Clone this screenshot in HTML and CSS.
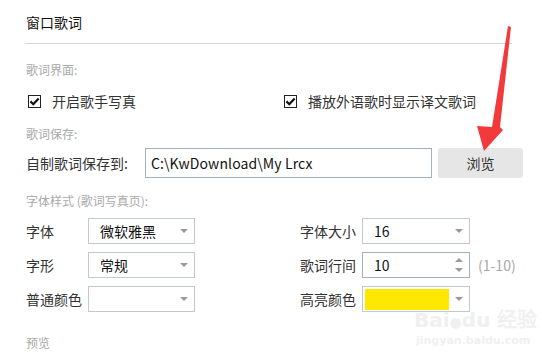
FILE: index.html
```html
<!DOCTYPE html>
<html lang="zh-cn">
<head>
    <meta charset="UTF-8">
    <meta name="viewport" content="width=device-width, initial-scale=1.0">
    <title>窗口歌词</title>
    <link rel="stylesheet" href="styles.css">
</head>
<body>

    <div class="panel">
        <div class="title">窗口歌词</div>

        <div class="group-label first">歌词界面:</div>
        <div class="checks">
            <label class="check">
                <span class="box">
                    <svg width="11" height="11" viewBox="0 0 11 11"><path d="M1.5 5.4 L4.3 8.2 L9.6 2.6" fill="none" stroke="#111" stroke-width="2.2"/></svg>
                </span>
                <span>开启歌手写真</span>
            </label>
            <label class="check">
                <span class="box">
                    <svg width="11" height="11" viewBox="0 0 11 11"><path d="M1.5 5.4 L4.3 8.2 L9.6 2.6" fill="none" stroke="#111" stroke-width="2.2"/></svg>
                </span>
                <span>播放外语歌时显示译文歌词</span>
            </label>
        </div>

        <div class="group-label">歌词保存:</div>
        <div class="save-row">
            <span class="save-label">自制歌词保存到:</span>
            <div class="path-input">C:\KwDownload\My Lrcx</div>
            <button class="browse-btn">浏览</button>
        </div>

        <div class="group-label">字体样式 (歌词写真页):</div>
        <div class="font-grid">
            <span class="lbl">字体</span>
            <div class="select"><span>微软雅黑</span><i class="caret"></i></div>
            <span></span>
            <span class="lbl">字体大小</span>
            <div class="select"><span>16</span><i class="caret"></i></div>
            <span></span>

            <span class="lbl">字形</span>
            <div class="select"><span>常规</span><i class="caret"></i></div>
            <span></span>
            <span class="lbl">歌词行间</span>
            <div class="select spin"><span>10</span>
                <span class="spin-arrows"><i class="up"></i><i class="down"></i></span>
            </div>
            <span class="range">(1-10)</span>

            <span class="lbl">普通颜色</span>
            <div class="select"><span></span><i class="caret"></i></div>
            <span></span>
            <span class="lbl">高亮颜色</span>
            <div class="select color"><span class="swatch"></span><i class="caret"></i></div>
            <span></span>
        </div>

        <div class="group-label preview">预览</div>
    </div>

    <!-- red arrow drawn over the screenshot -->
    <svg class="arrow" width="60" height="140" viewBox="470 20 60 140">
        <polygon points="508,26 511,27 500,127 503,130 484,151 477,126 492,127" fill="#f23a3a"/>
    </svg>

    <div class="watermark">
        <div class="wm-top">Bai<span class="paw">&#9679;</span>du 经验</div>
        <div class="wm-url">jingyan.baidu.com</div>
    </div>

</body>
</html>
```

FILE: styles.css
```css
* {
    box-sizing: border-box;
    margin: 0;
    padding: 0;
}
body {
    font-family: "Noto Sans CJK SC", "Noto Sans", sans-serif;
    font-size: 14px;
    color: #333;
    background-color: #fff;
    width: 542px;
    height: 357px;
    overflow: hidden;
    position: relative;
}
.panel {
    padding-left: 25px;
}
.title {
    height: 44px;
    width: 487px;
    padding: 12px 0 0 1px;
    line-height: 20px;
    color: #111;
    border-bottom: 1px solid #d6d6d6;
}
.group-label {
    padding-left: 1px;
    font-size: 12px;
    line-height: 18px;
    color: #a8a8a8;
    margin-top: 14px;
}
.group-label.first {
    margin-top: 17px;
}
.checks {
    display: flex;
    margin-top: 12px;
    padding-left: 3px;
    height: 20px;
}
.check {
    display: flex;
    align-items: center;
    width: 256px;
    line-height: 20px;
}
.box {
    width: 13px;
    height: 13px;
    border: 1px solid #222;
    display: flex;
    align-items: center;
    justify-content: center;
    margin-right: 11px;
}
.save-row {
    display: flex;
    align-items: center;
    margin-top: 5px;
    height: 30px;
}
.save-label {
    width: 120px;
    padding-left: 1px;
}
.path-input {
    width: 287px;
    height: 30px;
    border: 1px solid #9fb2c4;
    padding-left: 5px;
    line-height: 28px;
    font-size: 14px;
    letter-spacing: 0.1px;
    color: #111;
}
.browse-btn {
    width: 85px;
    height: 30px;
    margin-left: 6px;
    border: none;
    border-radius: 3px;
    background-color: #e6e6e6;
    font-family: inherit;
    font-size: 14px;
    color: #333;
}
.font-grid {
    display: grid;
    grid-template-columns: 63px 107px 104px 63px 108px 60px;
    grid-auto-rows: 26px;
    row-gap: 8px;
    margin-top: 8px;
    align-items: center;
}
.lbl {
    padding-left: 1px;
}
.select {
    height: 26px;
    border: 1px solid #c3c9d0;
    display: flex;
    align-items: center;
    justify-content: space-between;
    padding: 0 6px 0 11px;
    color: #111;
}
.caret {
    width: 0;
    height: 0;
    border-left: 4px solid transparent;
    border-right: 4px solid transparent;
    border-top: 4px solid #9a9a9a;
}
.spin {
    border-color: #9fb2c4;
}
.spin-arrows {
    display: flex;
    flex-direction: column;
    gap: 6px;
}
.spin-arrows i {
    width: 0;
    height: 0;
    border-left: 4px solid transparent;
    border-right: 4px solid transparent;
}
.spin-arrows .up {
    border-bottom: 4px solid #9a9a9a;
}
.spin-arrows .down {
    border-top: 4px solid #9a9a9a;
}
.range {
    padding-left: 8px;
    color: #a8a8a8;
}
.select.color {
    padding-left: 2px;
}
.swatch {
    width: 84px;
    height: 21px;
    background-color: #ffe800;
}
.group-label.preview {
    margin-top: 22px;
}
.arrow {
    position: absolute;
    left: 470px;
    top: 20px;
}
.watermark {
    position: absolute;
    left: 414px;
    top: 308px;
    color: #f0f0f0;
    font-family: "DejaVu Sans", sans-serif;
    font-weight: bold;
}
.wm-top {
    font-size: 20px;
    line-height: 24px;
}
.paw {
    font-size: 14px;
}
.wm-url {
    font-size: 11px;
    line-height: 14px;
    padding-left: 2px;
}
```
